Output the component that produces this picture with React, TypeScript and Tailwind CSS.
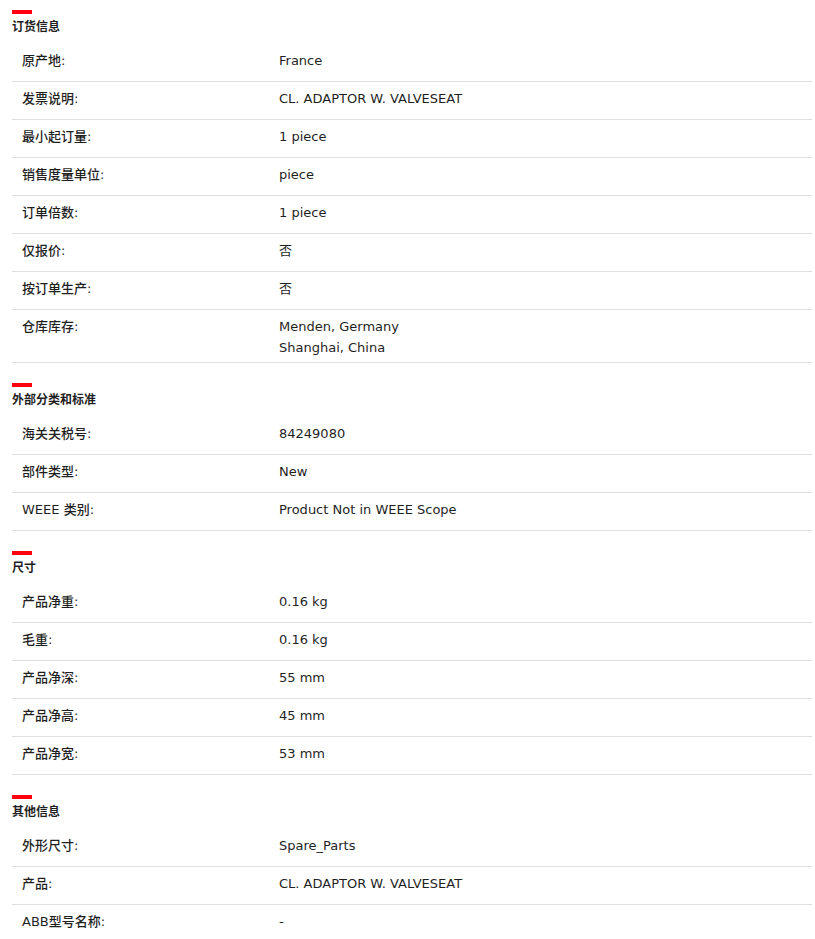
type Row = { label: string; value: string[] }
type Section = { title: string; rows: Row[] }

const sections: Section[] = [
  {
    title: "订货信息",
    rows: [
      { label: "原产地:", value: ["France"] },
      { label: "发票说明:", value: ["CL. ADAPTOR W. VALVESEAT"] },
      { label: "最小起订量:", value: ["1 piece"] },
      { label: "销售度量单位:", value: ["piece"] },
      { label: "订单倍数:", value: ["1 piece"] },
      { label: "仅报价:", value: ["否"] },
      { label: "按订单生产:", value: ["否"] },
      { label: "仓库库存:", value: ["Menden, Germany", "Shanghai, China"] },
    ],
  },
  {
    title: "外部分类和标准",
    rows: [
      { label: "海关关税号:", value: ["84249080"] },
      { label: "部件类型:", value: ["New"] },
      { label: "WEEE 类别:", value: ["Product Not in WEEE Scope"] },
    ],
  },
  {
    title: "尺寸",
    rows: [
      { label: "产品净重:", value: ["0.16 kg"] },
      { label: "毛重:", value: ["0.16 kg"] },
      { label: "产品净深:", value: ["55 mm"] },
      { label: "产品净高:", value: ["45 mm"] },
      { label: "产品净宽:", value: ["53 mm"] },
    ],
  },
  {
    title: "其他信息",
    rows: [
      { label: "外形尺寸:", value: ["Spare_Parts"] },
      { label: "产品:", value: ["CL. ADAPTOR W. VALVESEAT"] },
      { label: "ABB型号名称:", value: ["-"] },
    ],
  },
]

function SpecSection({ section }: { section: Section }) {
  return (
    <section className="mb-5">
      <div className="h-1 w-5 bg-[#ff000f]" />
      <h3 className="mt-[5px] mb-[9px] text-[12px] font-bold leading-4 text-[#1f1f1f]">{section.title}</h3>
      <dl>
        {section.rows.map((row) => (
          <div
            key={row.label}
            className="grid min-h-[38px] grid-cols-[267px_1fr] border-b border-[#e0e0e0] pt-[6px] pb-1 text-[13px] leading-[21px] text-[#1f1f1f]"
          >
            <dt className="pl-[10px] font-medium">{row.label}</dt>
            <dd>
              {row.value.map((v) => (
                <div key={v}>{v}</div>
              ))}
            </dd>
          </div>
        ))}
      </dl>
    </section>
  )
}

export default function App() {
  return (
    <div
      className="bg-white pt-[10px] pr-[3px] pl-3"
      style={{ fontFamily: '"DejaVu Sans", "Noto Sans CJK SC", sans-serif' }}
    >
      {sections.map((s) => (
        <SpecSection key={s.title} section={s} />
      ))}
    </div>
  )
}
